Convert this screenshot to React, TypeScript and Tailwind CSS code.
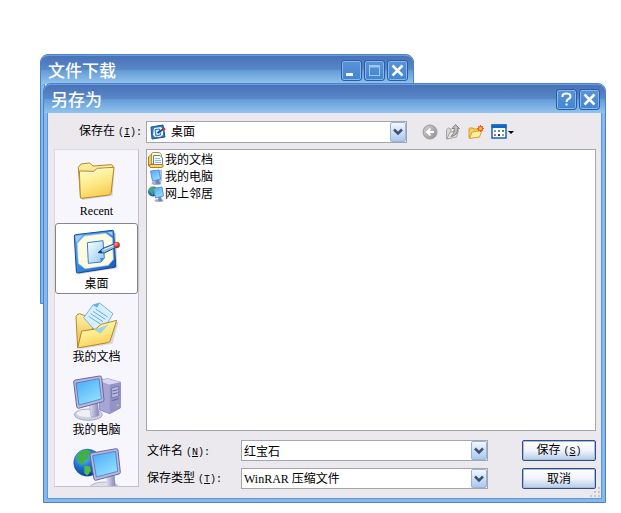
import React, { useState } from 'react';

const cjk = "font-['Liberation_Serif','Noto_Sans_CJK_SC',serif]";
const titleFont = "font-['Noto_Sans_CJK_SC',sans-serif]";

/* ---------- Large icons ---------- */

const Defs = () => (
  <svg className="absolute size-0" aria-hidden="true">
    <defs>
      <linearGradient id="folder" x1="0" y1="0" x2="0.4" y2="1">
        <stop offset="0" stopColor="#fffbd0" />
        <stop offset="0.55" stopColor="#fdec8c" />
        <stop offset="1" stopColor="#f8cf58" />
      </linearGradient>
      <linearGradient id="folderBack" x1="0" y1="0" x2="0" y2="1">
        <stop offset="0" stopColor="#fdf2a8" />
        <stop offset="1" stopColor="#e9b83e" />
      </linearGradient>
      <linearGradient id="board" x1="0" y1="0" x2="1" y2="1">
        <stop offset="0" stopColor="#6bb0ee" />
        <stop offset="0.5" stopColor="#3b87da" />
        <stop offset="1" stopColor="#1458b4" />
      </linearGradient>
      <linearGradient id="sheet" x1="0" y1="0" x2="1" y2="1">
        <stop offset="0" stopColor="#ffffff" />
        <stop offset="1" stopColor="#8cc8f4" />
      </linearGradient>
      <linearGradient id="screen" x1="0" y1="0" x2="0.6" y2="1">
        <stop offset="0" stopColor="#4aa8f6" />
        <stop offset="1" stopColor="#8fe0fe" />
      </linearGradient>
      <linearGradient id="metal" x1="0" y1="0" x2="1" y2="0">
        <stop offset="0" stopColor="#e6e6f4" />
        <stop offset="1" stopColor="#8382b8" />
      </linearGradient>
      <radialGradient id="globe" cx="0.35" cy="0.3" r="0.75">
        <stop offset="0" stopColor="#7cc8fa" />
        <stop offset="0.5" stopColor="#1c74d0" />
        <stop offset="1" stopColor="#073a8c" />
      </radialGradient>
      <radialGradient id="ball" cx="0.35" cy="0.3" r="0.7">
        <stop offset="0" stopColor="#ff9c80" />
        <stop offset="1" stopColor="#b01c10" />
      </radialGradient>
      <linearGradient id="grayFace" x1="0" y1="0" x2="1" y2="1">
        <stop offset="0" stopColor="#d2d2d2" />
        <stop offset="1" stopColor="#8e8e8e" />
      </linearGradient>
    </defs>
  </svg>
);

const RecentIcon = () => (
  <svg viewBox="0 0 144 144" className="size-12">
    <path d="M20 47 L124 40 L119 122 L28 135 Z" fill="#00000022" />
    <path d="M16 37 L24 27 L50 24 L60 33 L114 29 Q121 30 121 38 L114 110 L23 129 Z" fill="url(#folderBack)" stroke="#b48828" strokeWidth="3" strokeLinejoin="round" />
    <path d="M19 48 L62 49 L73 40 L123 37 L114 115 Q113 119 108 120 L26 130 Q23 130 22 126 Z" fill="url(#folder)" stroke="#b48828" strokeWidth="3" strokeLinejoin="round" />
    <path d="M23 52 L64 53 L75 44 L118 41" fill="none" stroke="#fffde8" strokeWidth="2.5" />
  </svg>
);

const DesktopIcon = () => (
  <svg viewBox="0 0 144 144" className="size-12">
    <path d="M10 28 L128 14 L133 121 L16 139 Z" fill="#00000033" />
    <path d="M4 24 Q4 20 8 20 L118 7 Q122 7 122 11 L128 114 Q128 118 124 118 L14 135 Q10 135 10 131 Z" fill="url(#board)" stroke="#0f4a9c" strokeWidth="3" />
    <path d="M34 24 L98 16 L118 30 L121 94 L106 112 L36 122 L16 106 L13 46 Z" fill="#fdfbe0" stroke="#a8d0f0" strokeWidth="2" />
    <path d="M7 24 L30 21 L10 44 Z M103 12 L118 11 L119 24 Z" fill="#9ccdf6" />
    <path d="M43 44 L90 38 L94 90 L84 102 L46 106 Z" fill="url(#sheet)" stroke="#3c80c8" strokeWidth="3" />
    <path d="M84 102 L81 90 L94 90 Z" fill="#3f90dc" />
    <path d="M75 74 L88 62 L124 47 L129 58 L94 75 Z" fill="#86bdf0" stroke="#20508c" strokeWidth="3" strokeLinejoin="round" />
    <path d="M75 74 L84 66 L88 75 Z" fill="#17365c" />
    <path d="M92 65 L124 52" stroke="#e8f5ff" strokeWidth="3" />
    <circle cx="131" cy="51" r="9" fill="url(#ball)" stroke="#8c1810" strokeWidth="1" />
  </svg>
);

const DocumentsIcon = () => (
  <svg viewBox="0 0 144 144" className="size-12">
    <path d="M20 144 L118 128 L136 64 L128 60 Z" fill="#00000022" />
    <path d="M9 47 Q10 40 20 38 L36 44 L44 42 L60 80 L14 141 Z" fill="url(#folderBack)" stroke="#b48828" strokeWidth="3" strokeLinejoin="round" />
    <path d="M32 50 L60 12 L80 6 L120 38 L98 76 L66 88 Z" fill="#d8efff" stroke="#76b4e6" strokeWidth="3" strokeLinejoin="round" />
    <path d="M60 12 L80 6 L72 20 Z" fill="#62aeee" />
    <path d="M68 24 L104 48 M60 31 L97 55 M53 38 L90 62 M47 46 L82 69" stroke="#66aee6" strokeWidth="3" />
    <path d="M14 141 L26 90 L68 84 L84 70 L131 58 L112 118 Q111 123 104 125 Z" fill="url(#folder)" stroke="#b48828" strokeWidth="3" strokeLinejoin="round" />
    <path d="M64 86 L108 70 L82 98 Z" fill="#8cccf6" opacity="0.85" />
  </svg>
);

const ComputerIcon = () => (
  <svg viewBox="0 0 144 144" className="size-12">
    <path d="M78 20 L104 14 L143 25 L142 102 L110 119 L80 108 Z" fill="#a6a5d4" stroke="#7674ac" strokeWidth="2" strokeLinejoin="round" />
    <path d="M78 20 L104 14 L143 25 L110 32 Z" fill="#d8d8f2" />
    <path d="M110 32 L143 25 L142 102 L110 119 Z" fill="#9492c6" />
    <path d="M116 42 L137 37 L137 66 L116 72 Z" fill="#b9b8e0" stroke="#6462a0" strokeWidth="2" />
    <path d="M119 51 L134 47 M119 60 L134 56 M116 80 L137 74" stroke="#6462a0" strokeWidth="3" />
    <circle cx="134" cy="94" r="3" fill="#7ff060" />
    <ellipse cx="46" cy="122" rx="42" ry="17" fill="#d0d0e2" stroke="#8c8cb0" strokeWidth="2" />
    <ellipse cx="44" cy="118" rx="34" ry="11" fill="#efeff8" />
    <path d="M48 88 L74 82 L78 124 Q66 132 54 128 Z" fill="url(#metal)" stroke="#7c7aae" strokeWidth="1" />
    <path d="M2 24 Q2 19 7 18 L80 6 Q85 6 86 10 L93 78 Q93 82 89 83 L17 103 Q12 103 11 98 Z" fill="#b7b6dc" stroke="#6b6aa0" strokeWidth="3" />
    <path d="M9 27 L78 14 L85 75 L18 93 Z" fill="url(#screen)" stroke="#3c68b0" strokeWidth="2" />
  </svg>
);

const NetworkIcon = () => (
  <svg viewBox="0 0 144 144" className="size-12">
    <circle cx="43" cy="47" r="41" fill="url(#globe)" stroke="#0c4898" strokeWidth="1" />
    <path d="M14 22 Q26 8 44 8 L54 16 L44 26 L48 34 L34 42 L26 54 L14 44 Z" fill="#3fb044" />
    <path d="M34 56 L50 58 L54 72 L42 86 L34 78 Z" fill="#52bc40" />
    <path d="M58 12 Q76 20 80 34 L64 32 Z" fill="#49b446" />
    <ellipse cx="94" cy="122" rx="44" ry="17" fill="#dedeee" stroke="#9a9aba" strokeWidth="2" />
    <path d="M98 84 L124 78 L128 122 L104 126 Z" fill="url(#metal)" />
    <path d="M51 24 Q51 19 56 18 L130 5 Q134 5 135 9 L142 76 Q142 80 138 81 L68 100 Q64 100 63 96 Z" fill="#b7b6dc" stroke="#6b6aa0" strokeWidth="3" />
    <path d="M59 26 L128 13 L134 73 L70 90 Z" fill="url(#screen)" stroke="#3c68b0" strokeWidth="2" />
  </svg>
);

/* ---------- Small icons ---------- */

const DesktopSmall = () => (
  <svg viewBox="0 0 16 16" className="size-4">
    <path d="M1 3 L13 1 L15 13 L2 15 Z" fill="#3278c4" stroke="#1a549c" />
    <path d="M4 4 L11 3 L13 6 V11 L10 13 L5 13 L3 11 Z" fill="#eef8ff" />
    <path d="M5 5.500 L9.500 5 L10.500 11 L6 12 Z" fill="#c8e4fa" stroke="#2c70b8" />
    <path d="M7.500 9 L13.500 5" stroke="#1c5090" strokeWidth="2" />
    <circle cx="14" cy="5" r="1.500" fill="#d04020" />
  </svg>
);

const DocumentsSmall = () => (
  <svg viewBox="0 0 16 16" className="size-4">
    <path d="M0.500 5 L3 2.500 H5 V14.500 H2 Q0.500 14.500 0.500 13 Z" fill="#f2c860" stroke="#b07c20" />
    <path d="M3.500 1.500 L5 0.500 H11.500 L13.500 2.500 V12 H3.500 Z" fill="#fdf4c4" stroke="#b88c34" />
    <path d="M5.500 3.500 H12 L14.500 6 V13 H5.500 Z" fill="#f4faff" stroke="#5c84bc" />
    <path d="M7 6.500 H12 M7 8.500 H13 M7 10.500 H13" stroke="#94b8e4" />
    <path d="M1.500 12.500 H15 V14 Q15 15.500 13.500 15.500 H3 Q1.500 15.500 1.500 14 Z" fill="#f8d878" stroke="#b07c20" />
  </svg>
);

const ComputerSmall = () => (
  <svg viewBox="0 0 16 16" className="size-4">
    <path d="M11 1 L14 0.500 V12 L11 14 Z" fill="#b4bce0" />
    <ellipse cx="8.500" cy="14" rx="5" ry="2" fill="#a4b0d4" />
    <path d="M7 10 H11 L12 15 H8 Z" fill="#6c86c0" />
    <path d="M2.500 2 L11 1 L12.500 10 L4.500 12 Z" fill="url(#screen)" stroke="#6c8cd0" />
  </svg>
);

const NetworkSmall = () => (
  <svg viewBox="0 0 16 16" className="size-4">
    <circle cx="5" cy="5.500" r="5" fill="url(#globe)" />
    <path d="M1 3 Q4 0 6 1 L6 4 L3 6 Z M3 6 L6 7 L4 10 Z" fill="#46b040" />
    <ellipse cx="11" cy="14.500" rx="4.500" ry="1.500" fill="#a4b0d4" />
    <path d="M10 10 H13 L14 15 H10.500 Z" fill="#6c86c0" />
    <path d="M5.500 2.500 L14 1 L15.500 10 L7.500 12 Z" fill="url(#screen)" stroke="#6c8cd0" />
  </svg>
);

const BackIcon = () => (
  <svg viewBox="0 0 16 16" className="size-4">
    <circle cx="8" cy="8" r="7" fill="url(#grayFace)" stroke="#9a9a9a" />
    <path d="M12 8 H5 M8.500 4.500 L5 8 L8.500 11.500" fill="none" stroke="#fff" strokeWidth="2" />
  </svg>
);

const UpIcon = () => (
  <svg viewBox="0 0 16 16" className="size-4">
    <path d="M1.500 15 V5.500 L3.500 4 L6 5 V14 Z" fill="#d8d8d8" stroke="#a4a4a4" />
    <path d="M2 15 L4.500 8.500 L13.500 6 L11.500 13 Z" fill="#e4e4e4" stroke="#a4a4a4" />
    <path d="M6 12.500 Q9.500 10 9.500 4.500 H7 L10.500 0.500 L14.500 4.500 H12.500 Q13 11.500 6 12.500 Z" fill="#bcbcbc" stroke="#858585" />
  </svg>
);

const NewFolderIcon = () => (
  <svg viewBox="0 0 16 16" className="size-4">
    <path d="M1 14 V5 Q1 4 2 4 L5 4 L6 5 L11 5 V13 Z" fill="#f6d058" stroke="#cf9c28" />
    <path d="M1.500 14.500 L4 8 L14 6.500 L11.500 13 Z" fill="#fdf0a4" stroke="#d8a42c" />
    <circle cx="12.500" cy="4.500" r="2.500" fill="#f0602c" />
    <path d="M12.500 1 V8 M9 4.500 H16 M10 2 L15 7 M15 2 L10 7" stroke="#ee5c2c" strokeWidth="1" />
    <circle cx="12.500" cy="4.500" r="1.500" fill="#ffc030" />
  </svg>
);

const ViewsIcon = () => (
  <svg viewBox="0 0 24 16" className="h-4 w-6">
    <rect x="1" y="1" width="14" height="13" fill="#fff" stroke="#1266c4" strokeWidth="1.5" />
    <path d="M0.500 0.500 H15.500 V4 H0.500 Z" fill="#1266c4" />
    <path d="M3 6 H5 V8 H3 Z" fill="#8a94b4" />
    <path d="M7 6 H9 V8 H7 Z" fill="#5c84c0" />
    <path d="M11 6 H13 V8 H11 Z" fill="#3c9c50" />
    <path d="M3 10 H5 V12 H3 Z" fill="#c86c48" />
    <path d="M7 10 H9 V12 H7 Z" fill="#1c3c94" />
    <path d="M11 10 H13 V12 H11 Z" fill="#b4a050" />
    <path d="M17 7 H23 L20 10 Z" fill="#000" />
  </svg>
);

/* ---------- Window pieces ---------- */

type Glyph = 'minimize' | 'maximize' | 'close' | 'help';

const glyphs: Record<Glyph, React.ReactNode> = {
  minimize: <rect x="4" y="12" width="7" height="3" fill="#fff" />,
  maximize: (
    <g fill="none" stroke="#9cc8f4">
      <rect x="4.500" y="4.500" width="10" height="10" />
      <path d="M4 5.500 H15" strokeWidth="2" />
    </g>
  ),
  close: <path d="M4.500 4.500 L14.500 14.500 M14.500 4.500 L4.500 14.500" stroke="#fff" strokeWidth="2.500" />,
  help: (
    <g>
      <path d="M5.500 7 V5.500 Q6 3.500 9.500 3.500 Q13.500 3.500 13.500 6.500 Q13.500 8 11.500 9 Q9.500 10 9.500 12" fill="none" stroke="#fff" strokeWidth="2" />
      <rect x="8.500" y="13.500" width="2" height="2" fill="#fff" />
    </g>
  ),
};

const CaptionButton: React.FC<{ glyph: Glyph }> = ({ glyph }) => (
  <button
    aria-label={glyph}
    className="size-[21px] rounded-[3px] border border-[#2c5ca6] bg-linear-to-b from-[#5c92d6] to-[#3f86d4] shadow-[inset_0_0_0_1px_#86b6ea]"
  >
    <svg viewBox="0 0 19 19" className="size-[19px]">{glyphs[glyph]}</svg>
  </button>
);

interface WindowFrameProps {
  title: string;
  buttons: Glyph[];
  className: string;
  children?: React.ReactNode;
}

const WindowFrame: React.FC<WindowFrameProps> = ({ title, buttons, className, children }) => (
  <section className={`flex flex-col rounded-t-lg border border-[#4d82c8] bg-[#84b8ee] px-[3px] pb-[3px] ${className}`}>
    <header className="-mx-[3px] flex h-[29px] shrink-0 items-center justify-between rounded-t-[7px] border-t border-[#6c9cdc] bg-[linear-gradient(#4a72b8,#5888c8_48%,#659cd8_52%,#92c4ec)] pr-[5px] pl-[7px]">
      <h1 className={`${titleFont} text-[17px] leading-6 font-medium text-white`}>{title}</h1>
      <div className="flex gap-0.5">
        {buttons.map((b) => (
          <CaptionButton key={b} glyph={b} />
        ))}
      </div>
    </header>
    <div className="flex-1 border border-t-0 border-[#5a96da] bg-[#ebe9ed]">{children}</div>
  </section>
);

const Key = ({ k, colon = true }: { k: string; colon?: boolean }) => (
  <span className="ml-[3px] font-['Liberation_Mono',monospace] text-[10px]">
    (<span className="underline">{k}</span>){colon && ':'}
  </span>
);

const Arrow = () => (
  <span className="pointer-events-none absolute inset-y-px right-px flex w-4 items-center justify-center rounded-[2px] border border-[#9ab4d6] bg-linear-to-b from-[#f2f8ff] to-[#a9c8ee]">
    <svg viewBox="0 0 10 8" className="h-2 w-2.5">
      <path d="M1 1.500 L5 5.500 L9 1.500" fill="none" stroke="#42526e" strokeWidth="2.500" />
    </svg>
  </span>
);

const places = [
  { name: 'Recent', icon: <RecentIcon /> },
  { name: '桌面', icon: <DesktopIcon /> },
  { name: '我的文档', icon: <DocumentsIcon /> },
  { name: '我的电脑', icon: <ComputerIcon /> },
];

const entries = [
  { name: '我的文档', icon: <DocumentsSmall /> },
  { name: '我的电脑', icon: <ComputerSmall /> },
  { name: '网上邻居', icon: <NetworkSmall /> },
];

const placeButton = 'flex h-[71px] shrink-0 flex-col items-center rounded-[3px] border pt-1';
const field = 'h-[21px] w-full appearance-none border border-[#a5a5ad] bg-white pl-0.5 pr-5 outline-none';
const pushButton =
  'h-[21px] w-[74px] rounded-[2px] border border-[#2f4f80] bg-linear-to-b from-white via-[#f1f4fa] to-[#b4cbe8] shadow-[inset_0_0_0_1px_#a9bedc]';

export default function App() {
  const [place, setPlace] = useState('桌面');
  const [fileName, setFileName] = useState('红宝石');

  return (
    <main className={`relative min-h-screen bg-white pt-[83px] pr-[15px] pl-[43px] text-xs leading-4 text-black ${cjk}`}>
      <Defs />
      <WindowFrame
        title="文件下载"
        buttons={['minimize', 'maximize', 'close']}
        className="absolute top-[54px] right-[207px] left-10 h-[250px]"
      />

      <WindowFrame title="另存为" buttons={['help', 'close']} className="relative">
        {/* Look in row */}
        <div className="flex items-center pt-2 pr-1.5">
          <label htmlFor="lookin" className="w-[94px] text-right">
            保存在<Key k="I" />
          </label>
          <div className="relative ml-1 w-[261px]">
            <span className="pointer-events-none absolute top-[3px] left-1">
              <DesktopSmall />
            </span>
            <select id="lookin" className="h-[22px] w-full appearance-none border border-[#a5a5ad] bg-white pr-5 pl-6 outline-none">
              <option>桌面</option>
            </select>
            <Arrow />
          </div>
          <div className="ml-[15px] flex gap-[7px]">
            <button aria-label="后退"><BackIcon /></button>
            <button aria-label="向上"><UpIcon /></button>
            <button aria-label="新建文件夹"><NewFolderIcon /></button>
            <button aria-label="查看"><ViewsIcon /></button>
          </div>
        </div>

        <div className="flex items-start gap-[7px] pt-1.5 pr-[5px] pb-[9px] pl-1.5">
          {/* Places bar */}
          <nav className="flex h-[338px] w-[85px] shrink-0 flex-col gap-0.5 overflow-hidden border border-[#dcdae0] border-r-[#c4c2c8] border-b-[#c4c2c8] bg-[#f7f6fc]">
            {places.map((p) => (
              <button
                key={p.name}
                onClick={() => setPlace(p.name)}
                className={`${placeButton} ${place === p.name ? 'border-[#85858c] bg-white' : 'border-transparent'}`}
              >
                {p.icon}
                <span>{p.name}</span>
              </button>
            ))}
            <button aria-label="网上邻居" className={`${placeButton} border-transparent`}>
              <NetworkIcon />
            </button>
          </nav>

          <div className="min-w-0 flex-1">
            <ul className="h-[282px] border border-[#a5a5ad] bg-white pt-px pl-px">
              {entries.map((e) => (
                <li key={e.name} className="flex h-[17px] items-center gap-px">
                  {e.icon}
                  {e.name}
                </li>
              ))}
            </ul>

            <div className="mt-[9px] grid grid-cols-[94px_1fr_74px] items-center gap-y-[7px] pl-px">
              <label htmlFor="filename" className="pt-0.5">
                文件名<Key k="N" />
              </label>
              <div className="relative mr-[34px]">
                <input id="filename" value={fileName} onChange={(e) => setFileName(e.target.value)} className={field} />
                <Arrow />
              </div>
              <button className={pushButton}>
                保存<Key k="S" colon={false} />
              </button>
              <label htmlFor="filetype">
                保存类型<Key k="T" />
              </label>
              <div className="relative mr-[34px]">
                <select id="filetype" className={field}>
                  <option>WinRAR 压缩文件</option>
                </select>
                <Arrow />
              </div>
              <button className={pushButton}>取消</button>
            </div>
          </div>
        </div>

        {/* Resize grip */}
        <svg viewBox="0 0 12 12" className="absolute right-1 bottom-1 size-3">
          <path d="M9 1h2v2h-2z M5 5h2v2h-2z M9 5h2v2h-2z M1 9h2v2h-2z M5 9h2v2h-2z M9 9h2v2h-2z" fill="#c9c6cd" />
        </svg>
      </WindowFrame>
    </main>
  );
}
